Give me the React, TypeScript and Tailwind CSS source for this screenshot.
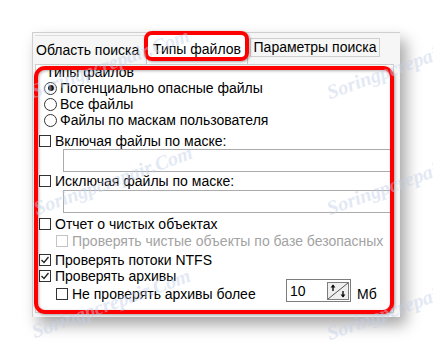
import React from "react";

function Radio({ checked }: { checked?: boolean }) {
  return (
    <span className="flex h-[13px] w-[13px] shrink-0 items-center justify-center rounded-full border border-[#333] bg-white">
      {checked && <span className="h-[6px] w-[6px] rounded-full bg-[#111]" />}
    </span>
  );
}

function Check({ checked, disabled }: { checked?: boolean; disabled?: boolean }) {
  return (
    <span
      className={
        disabled
          ? "flex h-[12px] w-[12px] shrink-0 items-center justify-center border border-[#c4c4c4] bg-white"
          : "flex h-[12px] w-[12px] shrink-0 items-center justify-center border border-[#333] bg-white"
      }
    >
      {checked && (
        <svg width="10" height="10" viewBox="0 0 10 10">
          <path d="M1.5 5 L4 7.5 L8.5 2" fill="none" stroke="#222" strokeWidth="1.3" />
        </svg>
      )}
    </span>
  );
}

function Watermark({ x, y }: { x: number; y: number }) {
  return (
    <span
      className="pointer-events-none absolute -translate-x-1/2 -translate-y-1/2 -rotate-[20deg] whitespace-nowrap text-[20px] font-bold italic text-[#c3cfe8] opacity-45"
      style={{ left: x, top: y, fontFamily: '"Liberation Serif", serif' }}
    >
      Soringpcrepair.Com
    </span>
  );
}

export default function App() {
  return (
    <div
      className="relative h-[349px] w-[433px] overflow-hidden bg-white pl-[32px] pt-[32px] text-[14px] text-black"
      style={{ fontFamily: '"Liberation Sans", Arial, sans-serif' }}
    >
      {/* window */}
      <div className="h-[285px] w-[368px] border-l border-t border-[#cfcfcf] bg-[#f6f6f6] shadow-[6px_8px_14px_rgba(0,0,0,0.35)]">
        {/* tabs */}
        <div className="flex h-[31px] items-start">
          <div className="ml-[2px] mt-[2px] w-[111px] border-t border-[#dcdcdc] pl-[1px] pt-[6px] leading-[16px]">
            Область поиска
          </div>
          <div className="mt-[1px] h-[30px] w-[102px] border border-b-0 border-[#c8c8c8] bg-white pt-[6px] text-center leading-[16px]">
            Типы файлов
          </div>
          <div className="ml-[2px] mt-[5px] h-[19px] w-[130px] border border-[#cfcfcf] text-center leading-[17px]">
            Параметры поиска
          </div>
        </div>

        {/* panel */}
        <div className="ml-[2px] h-[249px] w-[359px] border border-[#cfcfcf] bg-white">
          <div className="pl-[10px] leading-[15px]">Типы файлов</div>

          <div className="flex h-[16px] items-center gap-[3px] pl-[8px]">
            <Radio checked />
            <span>Потенциально опасные файлы</span>
          </div>
          <div className="flex h-[16px] items-center gap-[3px] pl-[8px]">
            <Radio />
            <span>Все файлы</span>
          </div>
          <div className="flex h-[16px] items-center gap-[3px] pl-[8px]">
            <Radio />
            <span>Файлы по маскам пользователя</span>
          </div>

          <div className="mt-[5px] flex h-[16px] items-center gap-[4px] pl-[3px]">
            <Check />
            <span>Включая файлы по маске:</span>
          </div>
          <div className="ml-[27px] h-[23px] w-[330px] border border-[#ababab] bg-white" />

          <div className="mt-[1px] flex h-[16px] items-center gap-[4px] pl-[3px]">
            <Check />
            <span>Исключая файлы по маске:</span>
          </div>
          <div className="ml-[27px] mt-[1px] h-[23px] w-[330px] border border-[#ababab] bg-white" />

          <div className="mt-[3px] flex h-[16px] items-center gap-[4px] pl-[3px]">
            <Check />
            <span>Отчет о чистых объектах</span>
          </div>
          <div className="mt-[1px] flex h-[16px] items-center gap-[4px] whitespace-nowrap pl-[20px] text-[#a3a3a3]">
            <Check disabled />
            <span>Проверять чистые объекты по базе безопасных</span>
          </div>

          <div className="mt-[3px] flex h-[16px] items-center gap-[4px] pl-[3px]">
            <Check checked />
            <span>Проверять потоки NTFS</span>
          </div>
          <div className="flex h-[16px] items-center gap-[4px] pl-[3px]">
            <Check checked />
            <span>Проверять архивы</span>
          </div>

          <div className="-mt-[5px] flex h-[23px] items-end pl-[20px]">
            <div className="flex h-[16px] w-[230px] items-center gap-[4px]">
              <Check />
              <span>Не проверять архивы более</span>
            </div>
            <div className="flex h-[23px] w-[65px] items-center border border-[#7d7d7d] bg-white pl-[3px]">
              <span className="flex-1 leading-[16px]">10</span>
              {/* spin button */}
              <svg width="22" height="18" viewBox="0 0 22 18" className="mr-[1px]">
                <rect x="0.5" y="0.5" width="21" height="17" fill="#efefef" stroke="#7d7d7d" />
                <line x1="1" y1="17" x2="21" y2="1" stroke="#555" strokeWidth="1" />
                <line x1="6" y1="3" x2="6" y2="9" stroke="#111" strokeWidth="1.4" />
                <path d="M3.5 5.5 L6 2.5 L8.5 5.5 Z" fill="#111" />
                <line x1="16" y1="9" x2="16" y2="15" stroke="#111" strokeWidth="1.4" />
                <path d="M13.5 12.5 L16 15.5 L18.5 12.5 Z" fill="#111" />
              </svg>
            </div>
            <span className="ml-[6px] leading-[16px]">Мб</span>
          </div>
        </div>
      </div>

      {/* red annotation outlines */}
      <div className="pointer-events-none absolute left-[144px] top-[31px] h-[30px] w-[105px] rounded-[8px] border-[4px] border-[#ff0000] shadow-[1px_1px_3px_rgba(0,0,0,0.35)]" />
      <div className="pointer-events-none absolute left-[34px] top-[66px] h-[248px] w-[360px] rounded-[11px] border-[4px] border-[#ff0000] shadow-[1px_1px_3px_rgba(0,0,0,0.35),inset_1px_1px_3px_rgba(0,0,0,0.3)]" />

      {/* watermarks */}
      <Watermark x={110} y={63} />
      <Watermark x={113} y={180} />
      <Watermark x={111} y={303} />
      <Watermark x={406} y={64} />
      <Watermark x={406} y={180} />
      <Watermark x={406} y={305} />
    </div>
  );
}
